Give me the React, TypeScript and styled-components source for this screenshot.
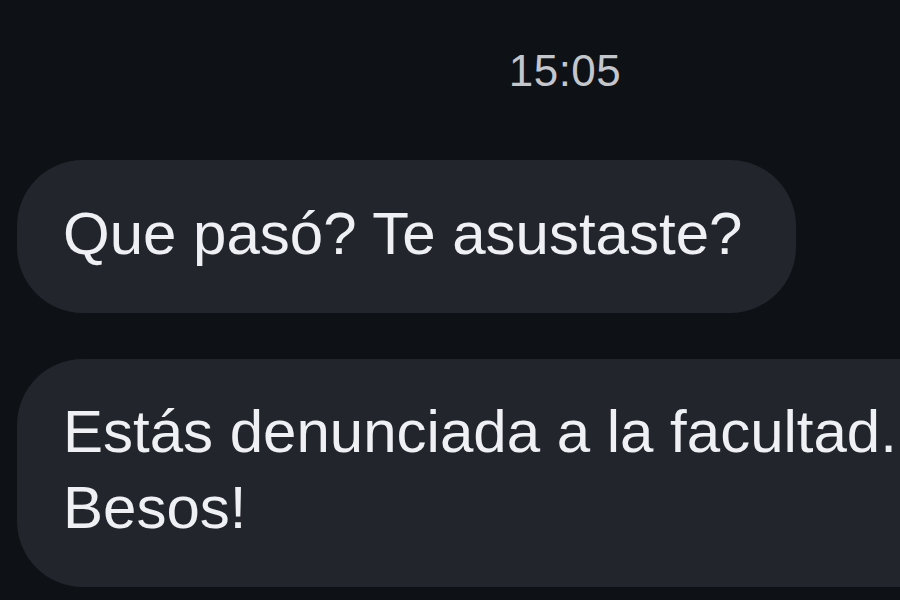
import React from "react";
import styled, { createGlobalStyle } from "styled-components";

const GlobalStyle = createGlobalStyle`
  html, body {
    margin: 0;
    padding: 0;
    background: #0e1115;
  }
  body {
    font-family: "Liberation Sans", Arial, Helvetica, sans-serif;
    -webkit-font-smoothing: antialiased;
  }
`;

const Screen = styled.div`
  width: 900px;
  height: 600px;
  overflow: hidden;
  background: #0e1115;
  display: flex;
  flex-direction: column;
  padding: 46px 0 0 17px;
  box-sizing: border-box;
`;

const Timestamp = styled.div`
  align-self: center;
  margin-left: 213px;
  font-size: 44px;
  line-height: 50px;
  color: #c3c6cc;
  letter-spacing: 0.5px;
`;

const Thread = styled.div`
  display: flex;
  flex-direction: column;
  align-items: flex-start;
  gap: 46px;
  margin-top: 64px;
`;

const Bubble = styled.div<{ $wide?: boolean }>`
  display: flex;
  align-items: center;
  box-sizing: border-box;
  flex-shrink: 0;
  background: #22252c;
  color: #eef0f3;
  border-radius: 66px;
  padding: 0 54px 0 46px;
  font-size: 60px;
  line-height: 76px;
  white-space: nowrap;
  min-height: ${(p) => (p.$wide ? "228px" : "153px")};
  width: ${(p) => (p.$wide ? "1100px" : "auto")};
`;

const Text = styled.span`
  display: block;
  margin-top: -6px;
`;

export default function App() {
  return (
    <>
      <GlobalStyle />
      <Screen>
        <Timestamp>15:05</Timestamp>
        <Thread>
          <Bubble>
            <Text>Que pasó? Te asustaste?</Text>
          </Bubble>
          <Bubble $wide>
            <Text>
              Estás denunciada a la facultad.
              <br />
              Besos!
            </Text>
          </Bubble>
        </Thread>
      </Screen>
    </>
  );
}
